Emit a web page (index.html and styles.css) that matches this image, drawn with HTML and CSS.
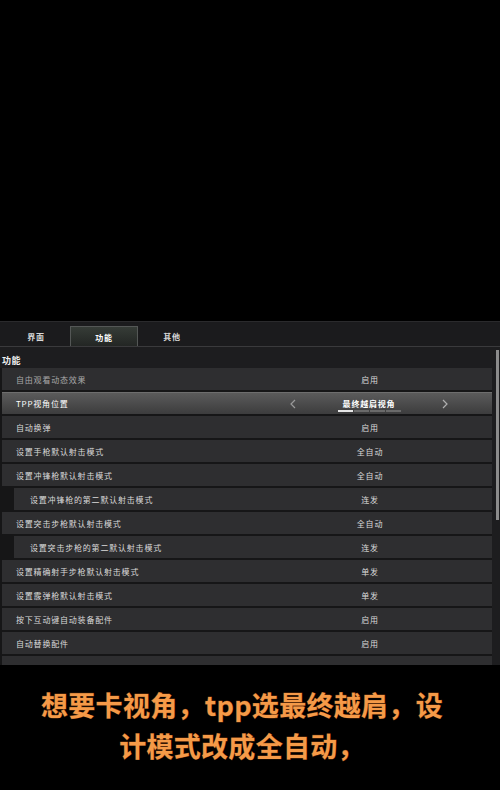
FILE: index.html
```html
<!DOCTYPE html>
<html lang="zh-CN">
<head>
  <meta charset="UTF-8" />
  <meta name="viewport" content="width=device-width, initial-scale=1.0" />
  <title>设置 - 功能</title>
  <link rel="stylesheet" href="styles.css">
</head>
<body>
  <div class="blank"></div>

  <section class="panel">
    <div class="tabs">
      <div class="tab">界面</div>
      <div class="tab active">功能</div>
      <div class="tab">其他</div>
    </div>

    <div class="heading">功能</div>

    <div class="rows">
      <div class="row dim">
        <span class="label">自由观看动态效果</span>
        <span class="value">启用</span>
      </div>
      <div class="row selected">
        <span class="label">TPP视角位置</span>
        <span class="value picker">
          <svg class="arrow" width="6" height="10" viewBox="0 0 6 10"><path d="M5 1 L1 5 L5 9" fill="none" stroke="#9a9a9a" stroke-width="1.2"/></svg>
          <span class="pick">
            <span>最终越肩视角</span>
            <span class="dots"><i class="on"></i><i></i><i></i><i></i></span>
          </span>
          <svg class="arrow" width="6" height="10" viewBox="0 0 6 10"><path d="M1 1 L5 5 L1 9" fill="none" stroke="#b0b0b0" stroke-width="1.2"/></svg>
        </span>
      </div>
      <div class="row">
        <span class="label">自动换弹</span>
        <span class="value">启用</span>
      </div>
      <div class="row">
        <span class="label">设置手枪默认射击模式</span>
        <span class="value">全自动</span>
      </div>
      <div class="row">
        <span class="label">设置冲锋枪默认射击模式</span>
        <span class="value">全自动</span>
      </div>
      <div class="row sub">
        <span class="label">设置冲锋枪的第二默认射击模式</span>
        <span class="value">连发</span>
      </div>
      <div class="row">
        <span class="label">设置突击步枪默认射击模式</span>
        <span class="value">全自动</span>
      </div>
      <div class="row sub">
        <span class="label">设置突击步枪的第二默认射击模式</span>
        <span class="value">连发</span>
      </div>
      <div class="row">
        <span class="label">设置精确射手步枪默认射击模式</span>
        <span class="value">单发</span>
      </div>
      <div class="row">
        <span class="label">设置霰弹枪默认射击模式</span>
        <span class="value">单发</span>
      </div>
      <div class="row">
        <span class="label">按下互动键自动装备配件</span>
        <span class="value">启用</span>
      </div>
      <div class="row">
        <span class="label">自动替换配件</span>
        <span class="value">启用</span>
      </div>
      <div class="row"></div>
    </div>

    <div class="scrollbar"></div>
  </section>

  <div class="caption">
    <p>想要卡视角，tpp选最终越肩，设</p>
    <p>计模式改成全自动，</p>
  </div>
</body>
</html>
```

FILE: styles.css
```css
* {
  margin: 0;
  padding: 0;
  box-sizing: border-box;
}

html, body {
  width: 500px;
  height: 790px;
  background: #000;
  overflow: hidden;
  font-family: "Noto Sans CJK SC", "Noto Sans", sans-serif;
}

.blank {
  height: 321px;
}

.panel {
  position: relative;
  height: 344px;
  background: #1d1d1f;
  overflow: hidden;
}

.tabs {
  display: flex;
  align-items: flex-end;
  height: 26px;
  padding-left: 2px;
  background: #1b1b1d;
  border-top: 1px solid #2a2a2c;
  border-bottom: 1px solid #3a3a3c;
}

.tab {
  width: 68px;
  height: 20px;
  display: flex;
  align-items: center;
  justify-content: center;
  padding-top: 1px;
  font-size: 8px;
  font-weight: bold;
  letter-spacing: 0.8px;
  color: #d8d8d8;
}

.tab.active {
  color: #fff;
  border: 1px solid #545756;
  border-bottom: none;
  background: linear-gradient(#363c37, #232624);
}

.heading {
  height: 21px;
  padding: 7px 0 0 2px;
  font-size: 9px;
  line-height: 13px;
  font-weight: bold;
  color: #f2f2f2;
  letter-spacing: 0.6px;
}

.rows {
  display: flex;
  flex-direction: column;
  gap: 2px;
  width: 492px;
  padding: 0 0 0 2px;
  background: #161617;
}

.row {
  display: flex;
  align-items: center;
  height: 22px;
  flex-shrink: 0;
  background: #2e2e30;
  font-size: 8px;
  letter-spacing: 0.8px;
  color: #dadada;
}

.row .label {
  flex: 1;
  padding-left: 14px;
}

.row.sub {
  margin-left: 12px;
}

.row.sub .label {
  padding-left: 16px;
}

.row.dim .label {
  color: #a8a8a8;
}

.row .value {
  width: 244px;
  text-align: center;
}

.row.selected {
  background: linear-gradient(#5b5b5b, #3c3c3d);
  border-top: 1px solid #6e6e6e;
  color: #fff;
}

.picker {
  display: flex;
  align-items: center;
  justify-content: space-between;
  padding: 0 44px 0 42px;
}

.pick {
  display: flex;
  flex-direction: column;
  align-items: center;
  gap: 1px;
  margin-top: 3px;
  font-weight: bold;
}

.dots {
  display: flex;
  gap: 1px;
}

.dots i {
  width: 15px;
  height: 2px;
  background: #6a6a6a;
}

.dots i.on {
  background: #e6e6e6;
}

.scrollbar {
  position: absolute;
  top: 29px;
  right: 1px;
  width: 3px;
  height: 170px;
  background: #8c8c8c;
}

.caption {
  padding: 19px 16px 0 0;
  text-align: center;
  font-size: 27px;
  line-height: 41px;
  font-weight: bold;
  letter-spacing: 0.3px;
  color: #f59a48;
  -webkit-text-stroke: 0.8px #5a2c0c;
  paint-order: stroke fill;
}
```
